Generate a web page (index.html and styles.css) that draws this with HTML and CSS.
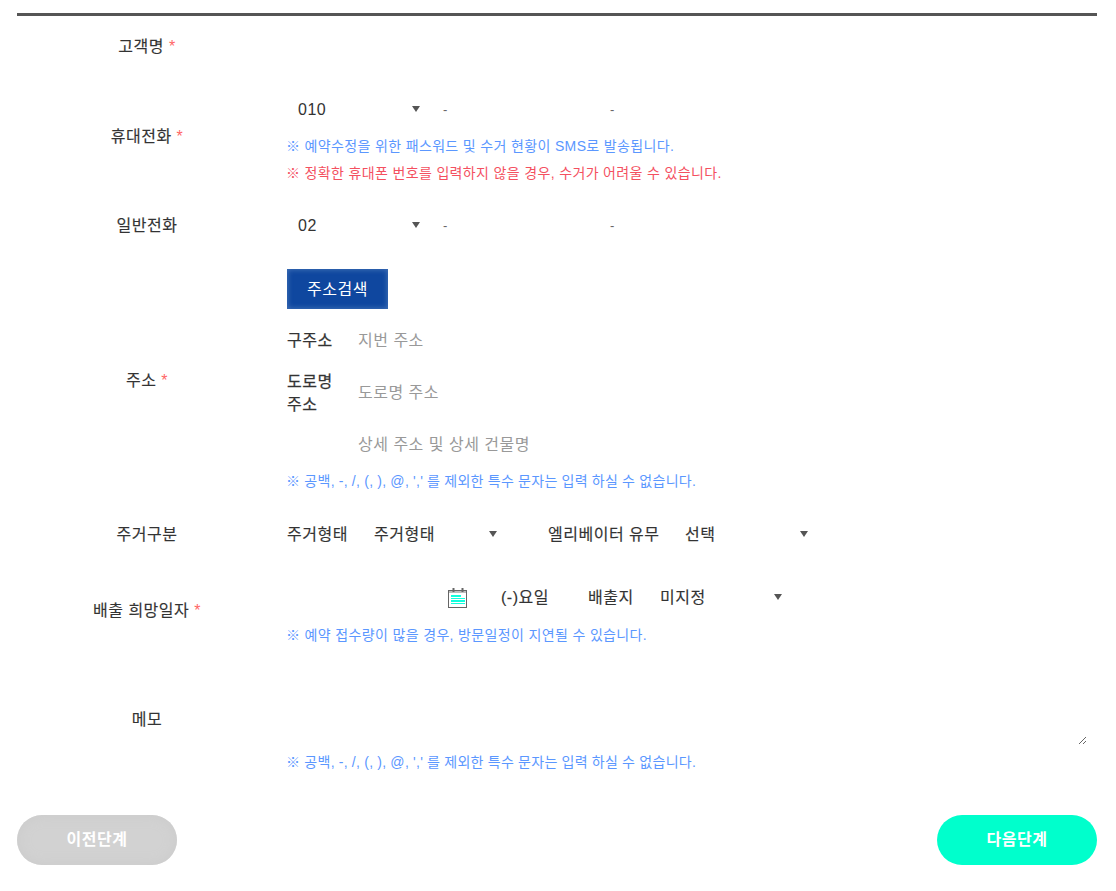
FILE: index.html
```html
<!DOCTYPE html>
<html lang="ko">
<head>
<meta charset="utf-8">
<title>수거 예약</title>
<link rel="stylesheet" href="styles.css">
</head>
<body>
<form class="form">
  <div class="row row-name">
    <div class="label">고객명 <span class="req">*</span></div>
    <div class="value"></div>
  </div>
  <div class="row row-mobile">
    <div class="label">휴대전화 <span class="req">*</span></div>
    <div class="value">
      <div class="line">
        <div class="select s-phone"><select><option>010</option></select></div>
        <span class="dash">-</span>
        <input class="phone" type="text">
        <span class="dash">-</span>
        <input class="phone" type="text">
      </div>
      <p class="note first">※ 예약수정을 위한 패스워드 및 수거 현황이 SMS로 발송됩니다.</p>
      <p class="note red">※ 정확한 휴대폰 번호를 입력하지 않을 경우, 수거가 어려울 수 있습니다.</p>
    </div>
  </div>
  <div class="row row-tel">
    <div class="label">일반전화</div>
    <div class="value">
      <div class="line">
        <div class="select s-phone"><select><option>02</option></select></div>
        <span class="dash">-</span>
        <input class="phone" type="text">
        <span class="dash">-</span>
        <input class="phone" type="text">
      </div>
    </div>
  </div>
  <div class="row row-addr">
    <div class="label">주소 <span class="req">*</span></div>
    <div class="value">
      <button class="search" type="button">주소검색</button>
      <div class="addr a1"><span class="addr-key">구주소</span><input class="addr-input" type="text" placeholder="지번 주소"></div>
      <div class="addr a2"><span class="addr-key">도로명 주소</span><input class="addr-input" type="text" placeholder="도로명 주소"></div>
      <div class="addr a3"><span class="addr-key"></span><input class="addr-input" type="text" placeholder="상세 주소 및 상세 건물명"></div>
      <p class="note special addr-note">※ 공백, -, /, (, ), @, ',' 를 제외한 특수 문자는 입력 하실 수 없습니다.</p>
    </div>
  </div>
  <div class="row row-type">
    <div class="label">주거구분</div>
    <div class="value">
      <div class="line">
        <span class="key k-type">주거형태</span>
        <div class="select s-type"><select><option>주거형태</option></select></div>
        <span class="key k-elev">엘리베이터 유무</span>
        <div class="select s-elev"><select><option>선택</option></select></div>
      </div>
    </div>
  </div>
  <div class="row row-date">
    <div class="label">배출 희망일자 <span class="req">*</span></div>
    <div class="value">
      <div class="line date-line">
        <input class="date" type="text">
        <svg class="cal" width="20" height="20" viewBox="0 0 20 20" aria-hidden="true">
          <rect x="0.5" y="2.5" width="18" height="17" fill="#fff" stroke="#666" stroke-width="1"/>
          <rect x="1" y="3" width="17" height="2" fill="#bbb"/>
          <rect x="4.5" y="0" width="2" height="4" fill="#666"/>
          <rect x="13.5" y="0" width="2" height="4" fill="#666"/>
          <rect x="3" y="7" width="10" height="2" fill="#1fd"/>
          <rect x="3" y="10" width="14" height="1" fill="#1fd"/>
          <rect x="3" y="12" width="14" height="2" fill="#1fd"/>
          <rect x="3" y="15" width="14" height="1" fill="#1fd"/>
        </svg>
        <span class="key k-day">(-)요일</span>
        <span class="key k-place">배출지</span>
        <div class="select s-place"><select><option>미지정</option></select></div>
      </div>
      <p class="note date-note">※ 예약 접수량이 많을 경우, 방문일정이 지연될 수 있습니다.</p>
    </div>
  </div>
  <div class="row row-memo">
    <div class="label">메모</div>
    <div class="value">
      <textarea class="memo"></textarea>
      <p class="note special memo-note">※ 공백, -, /, (, ), @, ',' 를 제외한 특수 문자는 입력 하실 수 없습니다.</p>
    </div>
  </div>
  <div class="actions">
    <button class="step prev" type="button">이전단계</button>
    <button class="step next" type="button">다음단계</button>
  </div>
</form>
</body>
</html>
```
FILE: styles.css
```css
* { box-sizing: border-box; }
html, body { margin: 0; padding: 0; background: #fff; }
body {
  font-family: "Liberation Sans", "Noto Sans CJK KR", sans-serif;
  font-size: 16px;
  color: #333;
  line-height: 20px;
  letter-spacing: 0.5px;
}
.form {
  margin: 13px 19px 0 17px;
  border-top: 3px solid #555;
}
.row { display: flex; align-items: center; }
.label { width: 260px; flex: none; text-align: center; padding-top: 2px; -webkit-text-stroke: 0.15px #333; }
.req { color: #f66; -webkit-text-stroke: 0; }
.value { margin-left: 10px; flex: 1; min-width: 0; }
.row-name { height: 60px; }
.row-mobile { height: 120px; }
.row-mobile .value { padding-top: 8px; }
.row-tel { height: 58px; }
.row-addr { height: 252px; }
.row-addr .value { align-self: flex-start; padding-top: 15px; }
.row-type { height: 56px; }
.row-date { height: 96px; }
.row-date .value { padding-top: 9px; }
.row-memo { height: 122px; }
.row-memo .value { align-self: flex-start; padding-top: 13px; }
.line { display: flex; align-items: center; height: 30px; }
.select { position: relative; flex: none; height: 30px; }
.select::after {
  content: "";
  position: absolute;
  right: 10px;
  top: 12px;
  border-left: 4px solid transparent;
  border-right: 4px solid transparent;
  border-top: 6px solid #555;
}
.select select {
  appearance: none;
  -webkit-appearance: none;
  width: 100%;
  height: 30px;
  border: 0;
  background: transparent;
  font: inherit;
  letter-spacing: inherit;
  color: #333;
  padding: 2px 0 0 11px;
}
.s-phone { width: 143px; }
.s-type { width: 133px; }
.s-type select { padding-left: 0; -webkit-text-stroke: 0.15px #333; }
.s-elev { width: 133px; }
.s-elev select { padding-left: 0; -webkit-text-stroke: 0.15px #333; }
.s-place { width: 132px; }
.s-place select { padding-left: 0; -webkit-text-stroke: 0.15px #333; }
.dash { font-size: 13px; color: #666; width: 7px; margin-left: 13px; padding-top: 2px; flex: none; }
.phone { width: 147px; height: 30px; border: 0; background: transparent; font: inherit; padding: 0 2px; }
.note { margin: 0 0 0 -1px; font-size: 14px; color: #5b97ff; line-height: 25px; padding-top: 2px; letter-spacing: 0.35px; }
.note.red { color: #f4505f; }
.note.first { margin-top: 8px; }
.note.special { word-spacing: -0.4px; }
.search {
  display: block;
  width: 101px;
  height: 40px;
  border: 0;
  padding: 2px 0 0;
  background: #0f479f;
  box-shadow: inset 0 0 5px 1px #3f6fb5;
  color: #fff;
  font: inherit;
  letter-spacing: inherit;
}
.addr { display: flex; align-items: center; height: 52px; }
.a1 { margin-top: 5px; }
.addr-key { width: 71px; flex: none; padding-right: 22px; line-height: 23px; padding-top: 1px; -webkit-text-stroke: 0.25px #333; }
.addr-input {
  flex: none;
  width: 400px;
  height: 30px;
  border: 0;
  padding: 2px 0 0;
  background: transparent;
  font: inherit;
  letter-spacing: inherit;
}
.addr-input::placeholder { color: #999; opacity: 1; }
.note.addr-note { margin-top: -3px; }
.key { flex: none; padding-top: 2px; -webkit-text-stroke: 0.15px #333; }
.k-type { width: 87px; }
.k-elev { width: 137px; margin-left: 41px; }
.date-line { height: 30px; }
.date { flex: none; width: 161px; height: 30px; border: 0; background: transparent; padding: 0; }
.cal { flex: none; margin-top: 3px; margin-right: 1px; }
.k-day { margin-left: 32px; width: 87px; }
.k-place { width: 72px; }
.note.date-note { margin-top: 9px; }
.memo {
  display: block;
  width: 800px;
  height: 74px;
  border: 0;
  outline: 0;
  background: #fff;
  resize: vertical;
  font: inherit;
}
.note.memo-note { margin-top: 3px; }
.actions { display: flex; justify-content: space-between; margin-top: 35px; }
.step {
  width: 160px;
  height: 50px;
  border: 0;
  border-radius: 25px;
  color: #fff;
  font: inherit;
  font-weight: 700;
  letter-spacing: inherit;
}
.prev { background: #d2d2d2; box-shadow: inset 0 0 14px #cbcbcb; }
.next { background: #00ffcc; }
```
